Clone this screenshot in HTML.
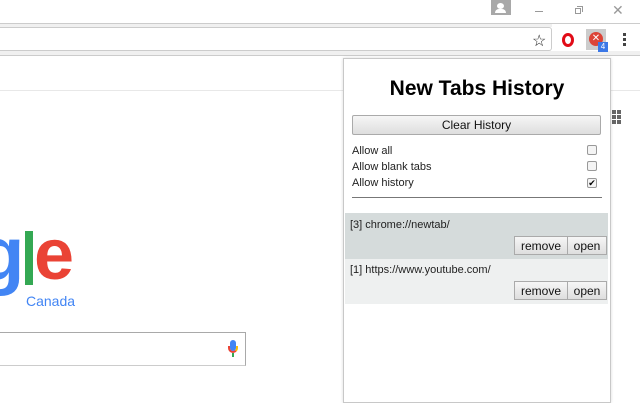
<!DOCTYPE html>
<html><head><style>
*{margin:0;padding:0;box-sizing:border-box}
body{width:640px;height:400px;overflow:hidden;background:#fff;font-family:"Liberation Sans",Arial,sans-serif;position:relative}
.a{position:absolute}
.btn{position:absolute;background:linear-gradient(#f6f6f6,#dedede);border:1px solid #aaa;font-size:12px;color:#111;text-align:center;line-height:18px;border-radius:2px}
.cb{position:absolute;width:10px;height:10px;border:1px solid #999;border-radius:2px;background:#f4f4f4;left:587px}
.lbl{position:absolute;left:352px;font-size:11px;color:#222}
</style></head><body>
<div class="a" style="left:0;top:23px;width:640px;height:1px;background:#ccc"></div>
<div class="a" style="left:0;top:24px;width:552px;height:3px;background:#f0f0f0"></div>
<div class="a" style="left:0;top:27px;width:552px;height:24px;background:#fff;border:1px solid #ccc;border-left:none;border-radius:0 3px 3px 0"></div>
<div class="a" style="left:0;top:51px;width:640px;height:5px;background:#f0f0f0;border-bottom:1px solid #ccc"></div>
<div class="a" style="left:0;top:90px;width:640px;height:1px;background:#e8e8e8"></div>
<div class="a" style="left:491px;top:0;width:20px;height:15px;background:#a8a8a8"></div>
<div class="a" style="left:497px;top:3px;width:7px;height:6px;border-radius:50%;background:#fff"></div>
<div class="a" style="left:495px;top:9px;width:11px;height:4px;border-radius:4px 4px 0 0;background:#fff"></div>
<div class="a" style="left:535px;top:11px;width:8px;height:1px;background:#999"></div>
<div class="a" style="left:575px;top:8px;width:6px;height:6px;border:1px solid #999"></div>
<div class="a" style="left:577px;top:6px;width:6px;height:6px;border-top:1px solid #999;border-right:1px solid #999"></div>
<div class="a" style="left:612px;top:2px;font-size:14px;color:#999">✕</div>
<div class="a" style="left:532px;top:31px;font-size:16px;color:#222">☆</div>
<div class="a" style="left:562px;top:33px;width:12px;height:14px;border:3px solid #e10b17;border-radius:50%"></div>
<div class="a" style="left:586px;top:29px;width:20px;height:21px;background:#ccc"></div>
<div class="a" style="left:589px;top:32px;width:14px;height:14px;border-radius:50%;background:#dc4437;color:#fff;font-size:10px;line-height:14px;text-align:center">✕</div>
<div class="a" style="left:598px;top:42px;width:10px;height:10px;background:#3b78e7;color:#fff;font-size:8px;line-height:10px;text-align:center">4</div>
<div class="a" style="left:623px;top:33px;width:3px;height:3px;background:#444;box-shadow:0 5px 0 #444,0 10px 0 #444"></div>
<div class="a" style="left:612px;top:110px;width:4px;height:4px;background:#666;box-shadow:5px 0 #666,0 5px #666,5px 5px #666,0 10px #666,5px 10px #666"></div>
<div class="a" style="left:-22px;top:215px;font-size:76px;line-height:80px;color:#4285f4;font-weight:bold">g</div>
<div class="a" style="left:25px;top:231px;width:8px;height:54px;background:#34a853"></div>
<div class="a" style="left:34px;top:215px;font-size:72px;line-height:80px;color:#ea4335;font-weight:bold">e</div>
<div class="a" style="left:26px;top:293px;font-size:14px;color:#4285f4">Canada</div>
<div class="a" style="left:-2px;top:332px;width:248px;height:34px;border:1px solid #a9a9a9;border-bottom-color:#ccc"></div>
<div class="a" style="left:230px;top:340px;width:6px;height:11px;border-radius:3px;background:#4285f4"></div>
<div class="a" style="left:228px;top:346px;width:10px;height:7px;border:2px solid #ea4335;border-top:none;border-radius:0 0 5px 5px;border-right-color:#fbbc05"></div>
<div class="a" style="left:232px;top:353px;width:2px;height:4px;background:#34a853"></div>
<div class="a" style="left:343px;top:58px;width:268px;height:345px;background:#fff;border:1px solid #c8c8c8;box-shadow:0 0 3px rgba(0,0,0,.15)"></div>
<div class="a" style="left:343px;top:77px;width:268px;text-align:center;font-size:21px;font-weight:bold;color:#000">New Tabs History</div>
<div class="btn" style="left:352px;top:115px;width:249px;height:20px">Clear History</div>
<div class="lbl" style="top:145px">Allow all</div><div class="cb" style="top:145px"></div>
<div class="lbl" style="top:161px">Allow blank tabs</div><div class="cb" style="top:161px"></div>
<div class="lbl" style="top:177px">Allow history</div><div class="cb" style="top:178px;font-size:9px;line-height:8px;text-align:center;color:#000">✔</div>
<div class="a" style="left:352px;top:197px;width:250px;height:1px;background:#777"></div>
<div class="a" style="left:345px;top:213px;width:263px;height:46px;background:#d5dbdb"></div>
<div class="a" style="left:350px;top:219px;font-size:11px;color:#222">[3] chrome://newtab/</div>
<div class="btn" style="left:514px;top:236px;width:54px;height:19px;border-radius:0">remove</div>
<div class="btn" style="left:567px;top:236px;width:40px;height:19px;border-radius:0">open</div>
<div class="a" style="left:345px;top:259px;width:263px;height:45px;background:#eef0f0"></div>
<div class="a" style="left:350px;top:264px;font-size:11px;color:#222">[1] https://www.youtube.com/</div>
<div class="btn" style="left:514px;top:281px;width:54px;height:19px;border-radius:0">remove</div>
<div class="btn" style="left:567px;top:281px;width:40px;height:19px;border-radius:0">open</div>
</body></html>
